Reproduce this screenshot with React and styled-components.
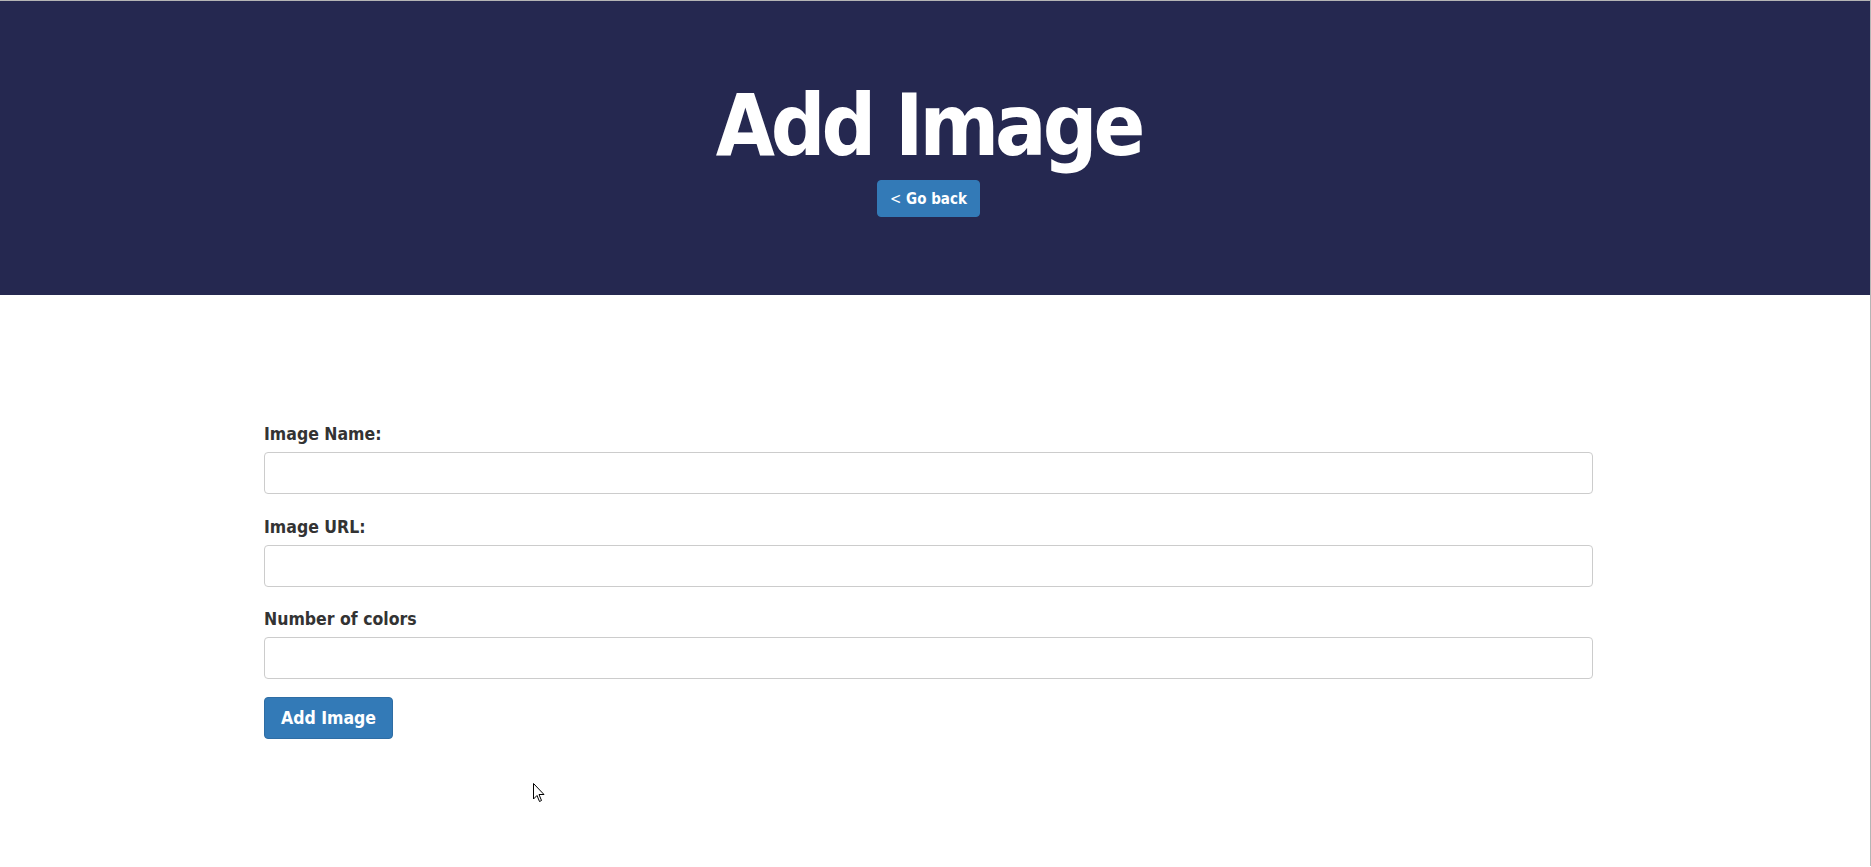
import React from "react";
import styled, { createGlobalStyle } from "styled-components";

const GlobalStyle = createGlobalStyle`
  html, body {
    margin: 0;
    padding: 0;
    background: #ffffff;
  }
  body {
    font-family: "DejaVu Sans Condensed", "DejaVu Sans", sans-serif;
    color: #333333;
    border-top: 1px solid #b5b5b5;
    border-right: 1px solid #b5b5b5;
    min-height: 866px;
    box-sizing: border-box;
  }
`;

const Page = styled.div`
  position: relative;
  display: flex;
  flex-direction: column;
`;

const Header = styled.header`
  height: 294px;
  background: #252850;
  display: flex;
  flex-direction: column;
  align-items: center;
  padding-right: 13px;
  box-sizing: border-box;
`;

const Title = styled.h1`
  margin: 82px 0 0;
  font-size: 85px;
  line-height: 1;
  font-weight: bold;
  letter-spacing: -4px;
  color: #ffffff;
`;

const Button = styled.button`
  font-family: inherit;
  font-weight: bold;
  color: #ffffff;
  background: #337ab7;
  border: 1px solid ${(p) => (p.$outlined ? "#2e6da4" : "#337ab7")};
  border-radius: 4px;
  cursor: pointer;
  font-size: ${(p) => p.$size}px;
  height: ${(p) => p.$height}px;
  padding: 0 ${(p) => p.$pad}px;
`;

const BackButton = styled(Button)`
  margin-top: 12px;
`;

const Chevron = styled.span`
  font-weight: normal;
`;

const Form = styled.form`
  width: 1329px;
  margin: 129px 0 0 264px;
  display: flex;
  flex-direction: column;
`;

const Field = styled.div`
  display: flex;
  flex-direction: column;
  gap: 8px;

  & + & {
    margin-top: 22.5px;
  }
`;

const Label = styled.label`
  font-size: 17.5px;
  font-weight: bold;
  line-height: 20px;
  color: #333333;
`;

const Input = styled.input`
  height: 42px;
  border: 1px solid #cccccc;
  border-radius: 4px;
  box-sizing: border-box;
  padding: 6px 12px;
  font-family: inherit;
  font-size: 16px;
`;

const Actions = styled.div`
  margin-top: 18px;
`;

const Cursor = styled.svg`
  position: absolute;
  left: 533px;
  top: 782px;
`;

export default function App() {
  return (
    <Page>
      <GlobalStyle />
      <Header>
        <Title>Add Image</Title>
        <BackButton type="button" $size={15} $height={37} $pad={12}>
          <Chevron>&lt;</Chevron> Go back
        </BackButton>
      </Header>
      <Form onSubmit={(e) => e.preventDefault()}>
        <Field>
          <Label>Image Name:</Label>
          <Input type="text" />
        </Field>
        <Field>
          <Label>Image URL:</Label>
          <Input type="text" />
        </Field>
        <Field>
          <Label>Number of colors</Label>
          <Input type="text" />
        </Field>
        <Actions>
          <Button type="submit" $outlined $size={17.5} $height={42} $pad={16}>
            Add Image
          </Button>
        </Actions>
      </Form>
      <Cursor width="12" height="20" viewBox="0 0 12 20">
        <path
          d="M0.5 0.5 L0.5 16 L4 12.5 L6.5 18.5 L8.5 17.5 L6 11.5 L11 11.5 Z"
          fill="#ffffff"
          stroke="#000000"
          strokeWidth="1"
        />
      </Cursor>
    </Page>
  );
}
